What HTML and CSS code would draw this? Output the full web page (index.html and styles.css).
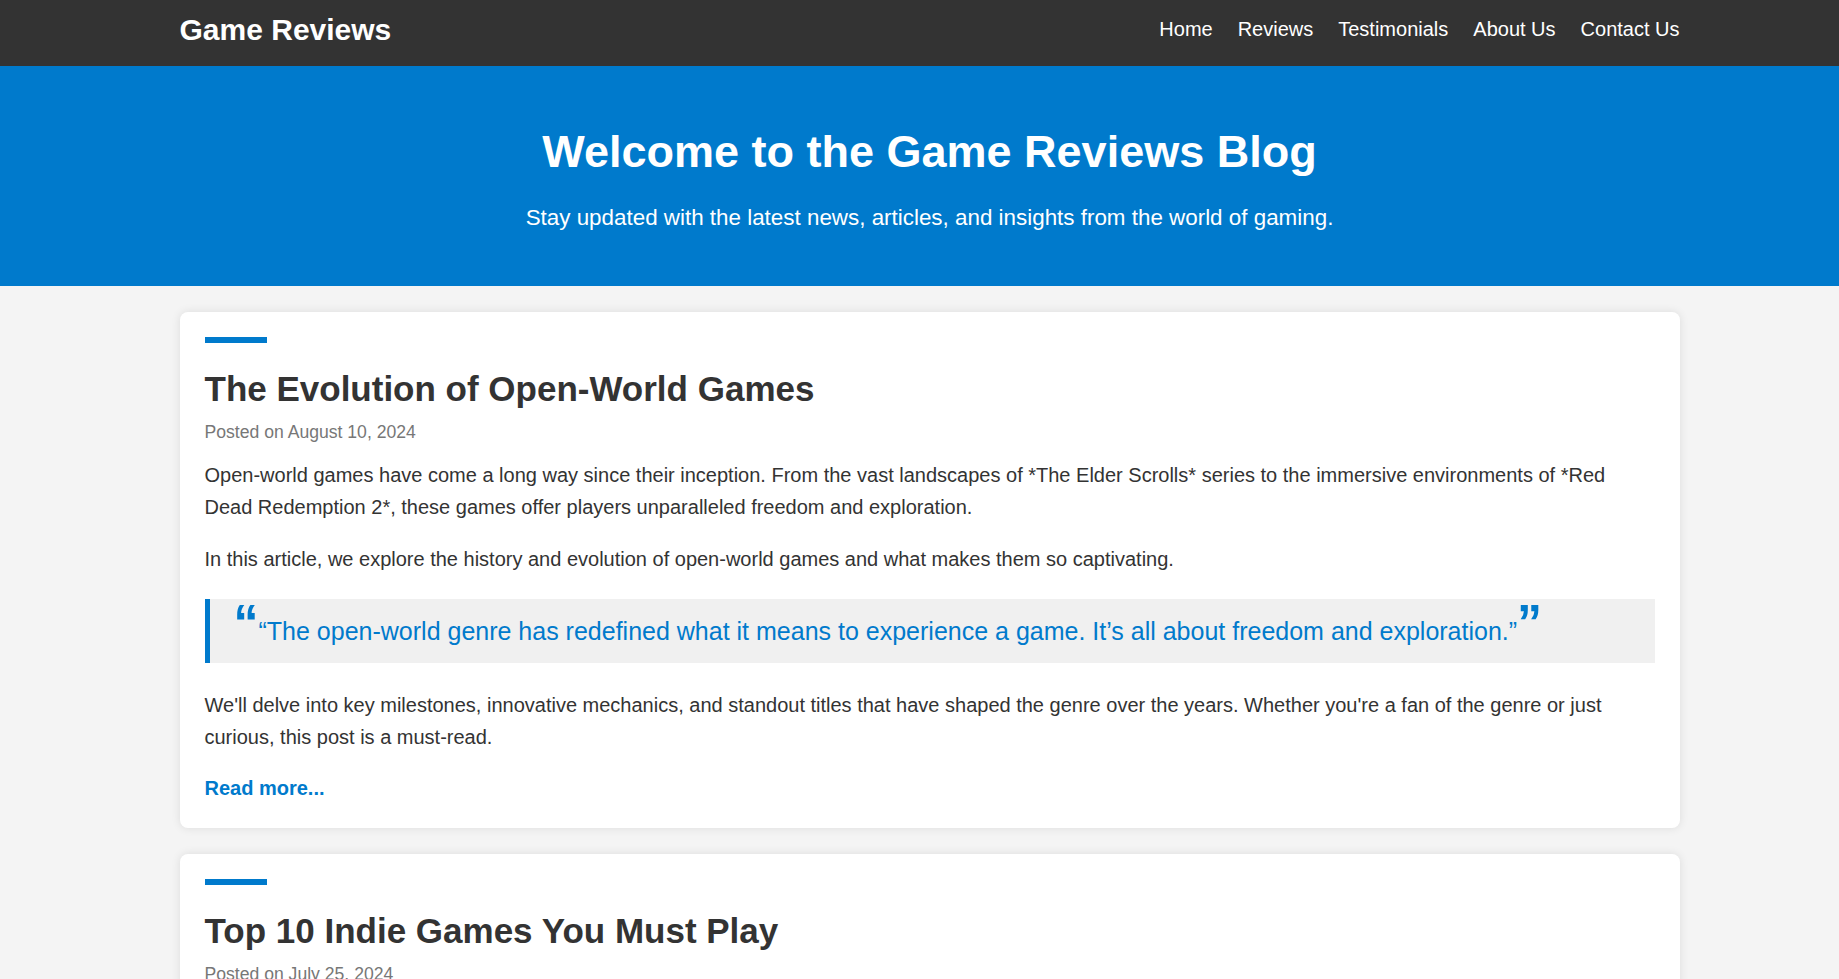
FILE: index.html
```html
<!DOCTYPE html>
<html lang="en">
<head>
<meta charset="utf-8">
<title>Game Reviews</title>
<link rel="stylesheet" href="styles.css">
</head>
<body>
<header class="site-header">
  <div class="header-inner">
    <div class="logo">Game Reviews</div>
    <nav>
      <ul class="nav-list">
        <li><a href="#">Home</a></li>
        <li><a href="#">Reviews</a></li>
        <li><a href="#">Testimonials</a></li>
        <li><a href="#">About Us</a></li>
        <li><a href="#">Contact Us</a></li>
      </ul>
    </nav>
  </div>
</header>
<section class="hero">
  <h1 class="hero-title">Welcome to the Game Reviews Blog</h1>
  <p class="hero-sub">Stay updated with the latest news, articles, and insights from the world of gaming.</p>
</section>
<main class="container">
  <article class="post">
    <div class="post-bar"></div>
    <h2 class="post-title">The Evolution of Open-World Games</h2>
    <p class="post-meta">Posted on August 10, 2024</p>
    <p class="post-text">Open-world games have come a long way since their inception. From the vast landscapes of *The Elder Scrolls* series to the immersive environments of *Red Dead Redemption 2*, these games offer players unparalleled freedom and exploration.</p>
    <p class="post-text">In this article, we explore the history and evolution of open-world games and what makes them so captivating.</p>
    <blockquote class="post-quote">“The open-world genre has redefined what it means to experience a game. It’s all about freedom and exploration.”</blockquote>
    <p class="post-text post-last">We'll delve into key milestones, innovative mechanics, and standout titles that have shaped the genre over the years. Whether you're a fan of the genre or just curious, this post is a must-read.</p>
    <a class="read-more" href="#">Read more...</a>
  </article>
  <article class="post">
    <div class="post-bar"></div>
    <h2 class="post-title">Top 10 Indie Games You Must Play</h2>
    <p class="post-meta">Posted on July 25, 2024</p>
    <p class="post-text">Indie games have taken the gaming world by storm, offering unique experiences that often rival big-budget titles. Here are ten indie gems that deserve a spot in your library.</p>
    <p class="post-text">From heartfelt stories to innovative gameplay, these titles prove that creativity knows no bounds.</p>
    <a class="read-more" href="#">Read more...</a>
  </article>
</main>
</body>
</html>
```

FILE: styles.css
```css
html, body {
  margin: 0;
  padding: 0;
}

body {
  font-family: "Liberation Sans", Arial, sans-serif;
  background: #f4f4f4;
  color: #333;
}

.site-header {
  background: #333;
  height: 66px;
}

.header-inner {
  max-width: 1520px;
  height: 100%;
  margin: 0 auto;
  padding: 0 0 7px 20px;
  box-sizing: border-box;
  display: flex;
  align-items: center;
  justify-content: space-between;
}

.logo {
  color: #fff;
  font-weight: bold;
  font-size: 30px;
}

.nav-list {
  list-style: none;
  margin: 0;
  padding: 0;
  display: flex;
  gap: 25px;
}

.nav-list a {
  color: #fff;
  text-decoration: none;
  font-size: 20px;
}

.hero {
  background: #007acc;
  color: #fff;
  text-align: center;
  padding: 60px 0 55px 20px;
}

.hero-title {
  margin: 0 0 27.5px;
  font-size: 45px;
  line-height: 1.15;
}

.hero-sub {
  margin: 0;
  font-size: 22.4px;
  line-height: 1.15;
}

.container {
  max-width: 1520px;
  margin: 0 auto;
  padding: 26px 0 26px 20px;
  box-sizing: border-box;
}

.post {
  background: #fff;
  border-radius: 8px;
  box-shadow: 0 0 10px rgba(0, 0, 0, 0.1);
  padding: 25px 25px 24.2px;
  margin-bottom: 26px;
  font-size: 20px;
  line-height: 1.6;
}

.post-bar {
  width: 62px;
  height: 6px;
  background: #007acc;
}

.post-title {
  margin: 26px 0 0;
  font-size: 35px;
  line-height: 1.15;
  color: #333;
}

.post-meta {
  margin: 8px 0 9.7px;
  color: #777;
  font-size: 17.6px;
  line-height: 1.8;
}

.post-text {
  margin: 0 0 20px;
}

.post-quote {
  margin: 24px 0 25.3px;
  padding: 12.3px 20px 12.3px 24px;
  border-left: 5px solid #007acc;
  background: #f0f0f0;
  color: #007acc;
  font-size: 25px;
  line-height: 1.6;
}

.post-quote::before {
  content: "\201C";
  font-size: 50px;
  font-weight: bold;
  line-height: 0;
}

.post-quote::after {
  content: "\201D";
  font-size: 50px;
  font-weight: bold;
  line-height: 0;
}

.post-last {
  margin-bottom: 19px;
}

.read-more {
  display: block;
  color: #007acc;
  font-weight: bold;
  text-decoration: none;
}
```
